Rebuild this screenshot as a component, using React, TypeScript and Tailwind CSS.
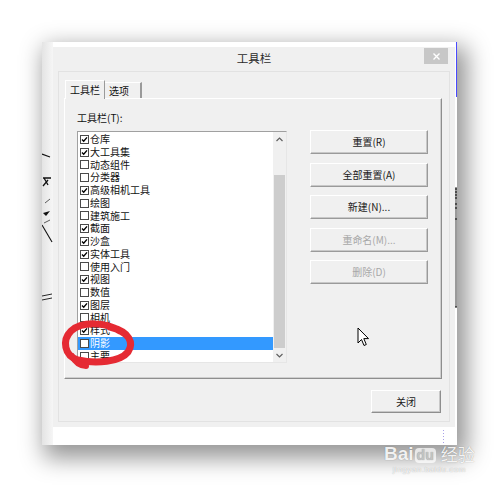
const items: { name: string; checked: boolean }[] = [
  { name: "仓库", checked: true },
  { name: "大工具集", checked: true },
  { name: "动态组件", checked: false },
  { name: "分类器", checked: false },
  { name: "高级相机工具", checked: true },
  { name: "绘图", checked: false },
  { name: "建筑施工", checked: false },
  { name: "截面", checked: true },
  { name: "沙盒", checked: true },
  { name: "实体工具", checked: true },
  { name: "使用入门", checked: false },
  { name: "视图", checked: true },
  { name: "数值", checked: false },
  { name: "图层", checked: true },
  { name: "相机", checked: false },
  { name: "样式", checked: true },
  { name: "阴影", checked: false },
  { name: "主要", checked: false },
];

function CheckBox({ checked }: { checked: boolean }) {
  return (
    <div className="w-[9px] h-[9px] shrink-0 bg-white border border-[#4a4a4a] flex items-center justify-center">
      {checked && (
        <svg width="7" height="7" viewBox="0 0 7 7">
          <path d="M1 3.6 L2.7 5.3 L6 1.4" fill="none" stroke="#000" strokeWidth="1.4" />
        </svg>
      )}
    </div>
  );
}

function Btn({ label, disabled }: { label: string; disabled?: boolean }) {
  return (
    <div
      className={`h-[24px] w-[118px] flex items-center justify-center text-[10px] leading-[14px] bg-[#f0f0f0] border border-t-white border-l-white border-r-[#9a9a9a] border-b-[#9a9a9a] shadow-[inset_-1px_-1px_0_#c8c8c8] ${
        disabled ? "text-[#a8a8a8]" : "text-[#1a1a1a]"
      }`}
    >
      {label}
    </div>
  );
}

export default function App() {
  return (
    <div className="relative w-[500px] h-[487px] overflow-hidden bg-white font-['Noto_Sans_CJK_SC',sans-serif]">
      <div className="pt-[42px] pl-[42px]">
        {/* glass frame */}
        <div className="flex w-[415px] h-[403px] bg-white shadow-[6px_9px_22px_4px_rgba(0,0,0,0.42)]">
          {/* underlying drawing seen at the left edge */}
          <div className="w-[11px] h-full bg-gradient-to-r from-[#e4e4e4] to-[#f6f6f6]">
            <svg width="11" height="403" viewBox="0 0 11 403">
              <path d="M0 112 L8 115" stroke="#111" strokeWidth="1.2" />
              <path d="M1 136 L9 136 M2 136 L6 143 M6 138 L1 144" stroke="#111" strokeWidth="1.3" fill="none" />
              <path d="M3 161 L8 157" stroke="#333" strokeWidth="0.8" />
              <path d="M1 171 L8 169 L4 174 Z" fill="#111" />
              <path d="M2 181 L8 178" stroke="#333" strokeWidth="0.8" />
              <path d="M0 183 L10 200" stroke="#111" strokeWidth="1.1" />
              <path d="M0 254 L10 252 M0 258 L10 256" stroke="#111" strokeWidth="0.9" />
            </svg>
          </div>
          {/* dialog */}
          <div className="mt-[5px] w-[402px] h-[380px] bg-[#f0f0f0] flex flex-col">
            {/* title bar */}
            <div className="h-[24px] flex items-start">
              <div className="w-[31px]" />
              <div className="flex-1 h-[24px] flex items-center justify-center text-[11.5px] text-[#2a2a2a]">工具栏</div>
              <div className="mt-[1px] mr-[7px] w-[24px] h-[16px] bg-[#c7c7c7] flex items-center justify-center">
                <svg width="7" height="7" viewBox="0 0 7 7">
                  <path d="M0.5 0.5 L6.5 6.5 M6.5 0.5 L0.5 6.5" stroke="#fff" strokeWidth="1.4" />
                </svg>
              </div>
            </div>
            {/* client area */}
            <div className="mx-[5px] flex-1 mb-[5px] border border-[#e2e2e2] flex flex-col">
              {/* tabs */}
              <div className="pl-[6px] pt-[8px] flex items-end">
                <div className="relative z-10 -mb-px h-[19px] w-[40px] bg-[#f0f0f0] border-t border-l border-white border-r border-r-[#9a9a9a] flex items-center pl-[4px] text-[10px] leading-[14px] text-[#111]">
                  工具栏
                </div>
                <div className="h-[16px] w-[37px] border-t border-white border-r-2 border-r-[#9a9a9a] flex items-center pl-[4px] text-[10px] leading-[14px] text-[#111]">
                  选项
                </div>
              </div>
              {/* tab panel */}
              <div className="ml-[5px] mr-[7px] h-[281px] border border-t-white border-l-white border-r-[#8e8e8e] border-b-[#8e8e8e] shadow-[inset_-1px_-1px_0_#cfcfcf] flex">
                <div className="pl-[12px] pt-[12px] flex flex-col">
                  <div className="h-[13px] leading-[13px] text-[10px] text-[#111]">工具栏(T):</div>
                  <div className="mt-[7px] w-[210px] h-[232px] bg-white border border-t-[#a0a0a0] border-l-[#a0a0a0] border-r-[#e6e6e6] border-b-[#e6e6e6] flex overflow-hidden">
                    <div className="flex-1 pt-[1px] flex flex-col overflow-hidden">
                      {items.map((it, i) => {
                        const sel = i === 16;
                        return (
                          <div
                            key={it.name}
                            className={`h-[12.75px] shrink-0 flex items-center pl-[2px] gap-[1px] text-[10px] leading-[12.75px] ${
                              sel ? "bg-[#3399ff] text-white" : "text-[#111]"
                            }`}
                          >
                            <CheckBox checked={it.checked} />
                            <span>{it.name}</span>
                          </div>
                        );
                      })}
                    </div>
                    {/* scrollbar */}
                    <div className="w-[13px] bg-[#f0f0f0] flex flex-col items-center">
                      <div className="h-[14px] flex items-center justify-center">
                        <svg width="7" height="5" viewBox="0 0 7 5">
                          <path d="M0.5 4 L3.5 1 L6.5 4" fill="none" stroke="#606060" strokeWidth="1.2" />
                        </svg>
                      </div>
                      <div className="mt-[29px] w-[11px] h-[173px] bg-[#cdcdcd]" />
                      <div className="flex-1 flex items-center justify-center">
                        <svg width="7" height="5" viewBox="0 0 7 5">
                          <path d="M0.5 1 L3.5 4 L6.5 1" fill="none" stroke="#606060" strokeWidth="1.2" />
                        </svg>
                      </div>
                    </div>
                  </div>
                </div>
                <div className="ml-[23px] pt-[31px] flex flex-col gap-[8.5px]">
                  <Btn label="重置(R)" />
                  <Btn label="全部重置(A)" />
                  <Btn label="新建(N)..." />
                  <Btn label="重命名(M)..." disabled />
                  <Btn label="删除(D)" disabled />
                </div>
              </div>
              {/* close */}
              <div className="mt-[11px] mr-[8px] flex justify-end">
                <div className="h-[23px] w-[70px] flex items-center justify-center text-[10px] leading-[14px] text-[#1a1a1a] bg-[#f0f0f0] border border-t-white border-l-white border-r-[#8e8e8e] border-b-[#8e8e8e] shadow-[inset_-1px_-1px_0_#c8c8c8]">
                  关闭
                </div>
              </div>
            </div>
          </div>
          {/* underlying window at right edge */}
          <div className="w-[2px] h-full">
            <svg width="2" height="403" viewBox="0 0 2 403">
              <path d="M1.5 0 L1.5 55" stroke="#4a4aff" strokeWidth="1" />
              <rect x="0" y="145" width="2" height="120" fill="#9a9a9a" />
              <path d="M0 147 L2 147 M0 150 L2 150 M0 153 L2 153 M0 156 L2 156 M0 162 L2 162 M0 166 L2 166 M0 177 L2 177 M0 265 L2 265" stroke="#000" strokeWidth="1" />
            </svg>
          </div>
        </div>
      </div>

      {/* red hand-drawn circle */}
      <svg className="absolute left-0 top-0 pointer-events-none" width="500" height="487" viewBox="0 0 500 487">
        <path
          d="M120 331 C106 322 82 321 71 331 C62 340 64 356 78 360 C96 364 120 362 128 352 C134 343 130 332 110 327"
          fill="none"
          stroke="#e52a33"
          strokeWidth="7"
          strokeLinecap="round"
        />
        <path d="M72 356 C75 362 80 366 86 366" fill="none" stroke="#e52a33" strokeWidth="6" strokeLinecap="round" />
        {/* mouse cursor */}
        <path
          d="M358 328 L358 343 L361.5 339.5 L364 345.5 L366.3 344.5 L363.8 338.6 L368.5 338.6 Z"
          fill="#fff"
          stroke="#000"
          strokeWidth="1"
          strokeLinejoin="round"
        />
        <path d="M443.5 430 L443.5 444" stroke="#a8a0e8" strokeWidth="1" strokeDasharray="1 2" />
      </svg>

      {/* watermark */}
      <div className="absolute left-[384px] top-[443px] flex flex-col items-center text-white/90 [text-shadow:0_0_1px_rgba(0,0,0,0.4)]">
        <div className="flex items-end font-['Liberation_Sans',sans-serif] font-bold text-[19px] leading-[22px]">
          <span>Bai</span>
          <span className="relative mx-[1px] px-[2px] bg-white/70 rounded-[4px] text-[#c4c4c4] text-[14px] leading-[15px] mb-[2px]">
            du
          </span>
          <span className="ml-[4px] font-['Noto_Sans_CJK_SC',sans-serif] font-normal text-[17px]">经验</span>
        </div>
        <div className="text-[8px] leading-[10px] font-['Liberation_Sans',sans-serif] tracking-[0.5px]">jingyan.baidu.com</div>
      </div>
    </div>
  );
}
